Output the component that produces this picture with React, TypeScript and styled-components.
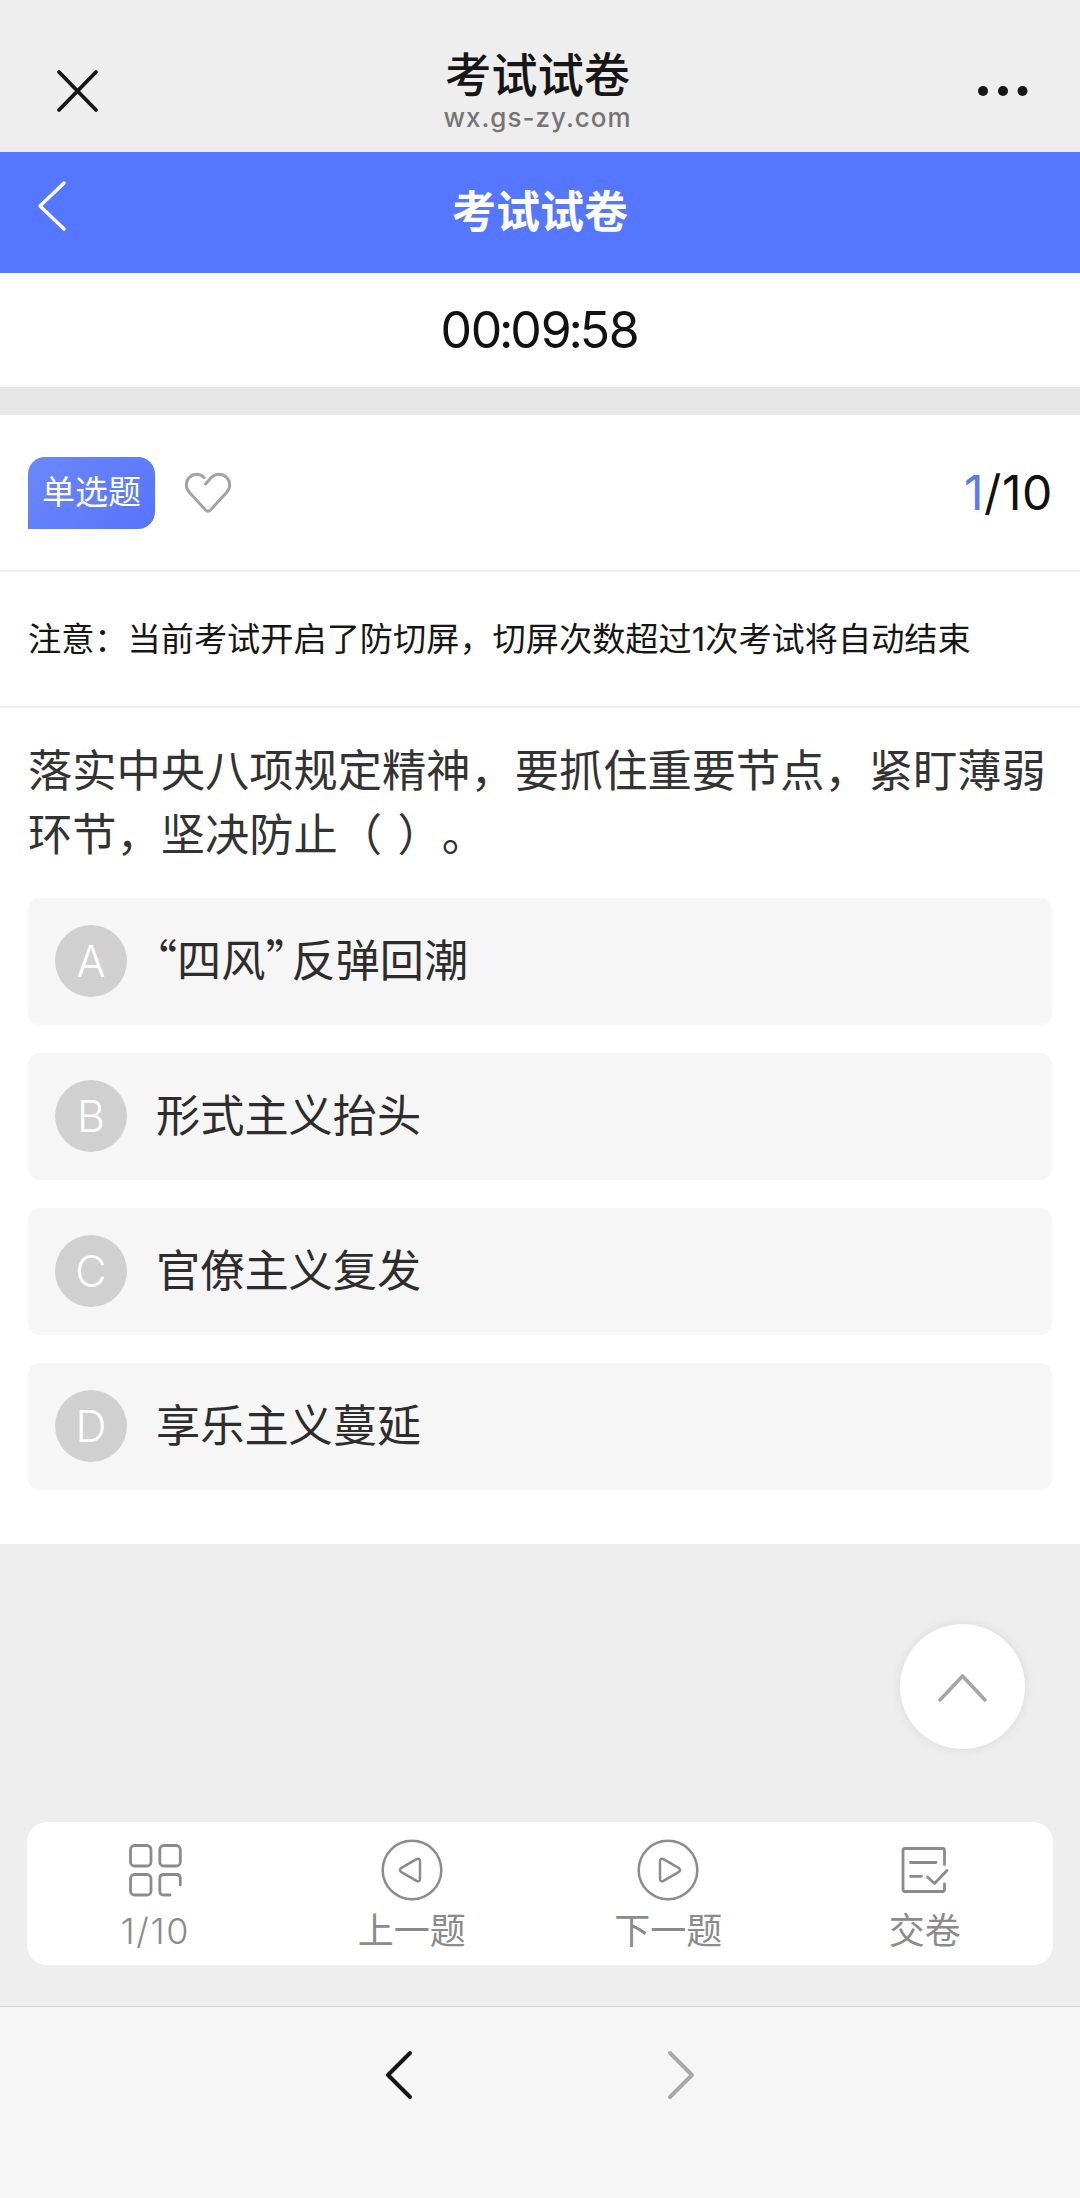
import React from 'react';
import styled, { createGlobalStyle } from 'styled-components';

const GlobalStyle = createGlobalStyle`
  * { box-sizing: border-box; }
  body {
    margin: 0;
    background: #eeeeee;
    font-family: Inter, "Noto Sans CJK SC", sans-serif;
    color: #1a1a1a;
    text-spacing-trim: space-all;
  }
  button {
    border: 0;
    padding: 0;
    background: none;
    font: inherit;
    color: inherit;
  }
  svg { display: block; flex: none; }
`;

const Page = styled.div`
  width: 1080px;
  height: 2198px;
  display: flex;
  flex-direction: column;
  overflow: hidden;
`;

const BrowserBar = styled.header`
  height: 152px;
  padding: 30px 52px 0 55px;
  display: flex;
  align-items: center;
  justify-content: space-between;
  background: #eeeeee;
`;

const BrowserTitle = styled.div`
  display: flex;
  flex-direction: column;
  align-items: center;
  padding-bottom: 2px;
  padding-right: 2px;
`;

const PageName = styled.div`
  font-size: 46.3px;
  font-weight: 500;
  line-height: 56px;
  color: #161616;
`;

const Host = styled.div`
  font-size: 26px;
  font-weight: 500;
  line-height: 30px;
  letter-spacing: 1px;
  color: #757575;
`;

const AppBar = styled.div`
  height: 121px;
  padding: 0 35px;
  display: grid;
  grid-template-columns: 60px 1fr 60px;
  align-items: center;
  background: #5576fe;
  color: #ffffff;
`;

const AppTitle = styled.h1`
  margin: 0;
  padding-bottom: 2px;
  font-size: 44px;
  font-weight: 700;
  line-height: 60px;
  text-align: center;
`;

const BackButton = styled.button`
  padding-bottom: 13px;
`;

const Timer = styled.div`
  height: 114px;
  padding-right: 1px;
  display: flex;
  justify-content: center;
  background: #ffffff;
  color: #111111;
  font-size: 50px;
  line-height: 115px;
  letter-spacing: -1.2px;
`;

const Colon = styled.span`
  margin: 0 -2px;
`;

const Spacer = styled.div`
  height: 28px;
  background: #e7e7e7;
`;

const Sheet = styled.main`
  height: 1129px;
  background: #ffffff;
`;

const Meta = styled.div`
  height: 157px;
  padding: 0 27px 0 28px;
  display: flex;
  align-items: center;
  border-bottom: 2px solid #eeeeee;
`;

const Tag = styled.div`
  width: 127px;
  height: 72px;
  border-radius: 17px 17px 17px 0;
  background: linear-gradient(135deg, #6c88fb, #5674fa);
  color: #ffffff;
  font-size: 33px;
  line-height: 70px;
  text-align: center;
`;

const Favourite = styled.button`
  margin-left: 29px;
`;

const Counter = styled.div`
  margin-left: auto;
  padding-top: 1px;
  font-size: 48px;
  line-height: 60px;
  letter-spacing: 0.6px;
  color: #111111;
`;

const Current = styled.span`
  color: #5b7be6;
`;

const Notice = styled.p`
  margin: 0;
  height: 136px;
  padding: 0 28px;
  border-bottom: 2px solid #eeeeee;
  font-size: 33.2px;
  line-height: 134px;
  white-space: nowrap;
  color: #161616;
`;

const Question = styled.p`
  margin: 0;
  padding: 31px 28px 0;
  height: 190px;
  font-size: 44.25px;
  line-height: 64px;
  color: #333333;
`;

const Line = styled.span`
  display: block;
  white-space: nowrap;
  word-spacing: 3px;
`;

const Options = styled.div`
  padding: 0 28px;
  display: flex;
  flex-direction: column;
  gap: 28px;
`;

const Option = styled.button`
  height: 127px;
  padding: 0 0 2px 27px;
  display: flex;
  align-items: center;
  gap: 29px;
  border-radius: 12px;
  background: #f6f6f6;
  color: #2d2d2d;
  font-size: 44.2px;
  line-height: 60px;
`;

const OptionText = styled.span`
  padding-top: 1px;
`;

const Letter = styled.span`
  width: 72px;
  height: 72px;
  border-radius: 50%;
  background: #d0d0d0;
  color: #ffffff;
  font-size: 43px;
  font-weight: 300;
  line-height: 73px;
  text-align: center;
`;

const Quote = styled.span<{ $width: number }>`
  display: inline-block;
  width: ${(p) => p.$width}px;
  font-family: "Noto Sans CJK SC", sans-serif;
  font-feature-settings: "palt";
  line-height: 1;
  text-align: center;
  text-indent: -2px;
`;

const Floor = styled.div`
  position: relative;
  height: 462px;
  padding: 278px 27px 0;
  background: #eeeeee;
`;

const ToTop = styled.button`
  position: absolute;
  top: 80px;
  right: 55px;
  width: 125px;
  height: 125px;
  border-radius: 50%;
  background: #ffffff;
  box-shadow: 0 0 12px rgba(0, 0, 0, 0.09);
  display: flex;
  align-items: center;
  justify-content: center;
`;

const Toolbar = styled.nav`
  height: 143px;
  border-radius: 20px;
  background: #ffffff;
  display: grid;
  grid-template-columns: repeat(4, 1fr);
`;

const Tool = styled.button`
  display: flex;
  flex-direction: column;
  align-items: center;
  padding-top: 16px;
  color: #8b8b8b;
  font-size: 36px;
  line-height: 48px;
`;

const ToolLabel = styled.span<{ $numeric?: boolean }>`
  margin-top: 5px;
  font-weight: ${(p) => (p.$numeric ? 300 : 400)};
  letter-spacing: ${(p) => (p.$numeric ? '1.6px' : '0')};
`;

const NavBar = styled.footer`
  height: 192px;
  border-top: 1px solid #d0d0d0;
  background: #f6f6f6;
  display: flex;
  justify-content: center;
  gap: 252px;
  padding-top: 42px;
`;

const icon = { fill: 'none', stroke: 'currentColor', strokeLinecap: 'round', strokeLinejoin: 'round' } as const;

const CloseIcon = () => (
  <svg width="44" height="44" viewBox="0 0 44 44" {...icon} stroke="#161616" strokeWidth="3.8">
    <path d="M4 3 41 41M41 3 4 41" />
  </svg>
);

const MoreIcon = () => (
  <svg width="50" height="14" viewBox="0 0 50 14" fill="#161616">
    <circle cx="5" cy="7" r="5" />
    <circle cx="25" cy="7" r="5" />
    <circle cx="44.5" cy="7" r="5" />
  </svg>
);

const BackIcon = () => (
  <svg width="34" height="52" viewBox="0 0 34 52" {...icon} strokeWidth="3.4">
    <path d="M29 3 5 26 29 49" />
  </svg>
);

const HeartIcon = () => (
  <svg width="48" height="42" viewBox="0 0 48 42" {...icon} stroke="#a3a3a3" strokeWidth="3">
    <path d="M20 5.500C15.500 1.200 9.500 1.500 5.500 5.300C1.200 9.600 1.200 16 5.500 20.500L21.500 38Q24 40.500 26.500 38L42.500 20.500C46.800 16 46.800 9.600 42.500 5.300C38.200 1.200 31.500 1.200 27.500 5.300L21.500 12" />
  </svg>
);

const GridIcon = () => (
  <svg width="64" height="64" viewBox="0 0 64 64" {...icon} strokeWidth="2.8">
    <rect x="7.500" y="7.500" width="20.500" height="20.500" rx="4" />
    <rect x="36.800" y="7.500" width="20.500" height="20.500" rx="4" />
    <rect x="7.500" y="36.500" width="20.500" height="20.500" rx="4" />
    <path d="M57.300 47V40.500Q57.300 36.500 53.300 36.500H40.800Q36.800 36.500 36.800 40.500V53Q36.800 57 40.800 57H47" />
  </svg>
);

const PlayIcon = ({ back = false }: { back?: boolean }) => (
  <svg width="64" height="64" viewBox="0 0 64 64" {...icon} strokeWidth="2.5">
    <circle cx="32" cy="32" r="29.300" />
    <path
      transform={back ? 'matrix(-1 0 0 1 64 0)' : undefined}
      d="M24 23.500Q24 19.500 27.500 21.200L42.500 29.800Q45.500 32 42.500 34.200L27.500 42.800Q24 44.500 24 40.500Z"
    />
  </svg>
);

const SubmitIcon = () => (
  <svg width="64" height="64" viewBox="0 0 64 64" {...icon} strokeWidth="2.8">
    <path d="M51.500 26.500V12.500Q51.500 10.500 49.500 10.500H12Q10 10.500 10 12.500V51.500Q10 53.500 12 53.500H49.500Q51.500 53.500 51.500 51.500V46M17.500 24.500H43M17.500 38.300H28.500M34.500 39 41.500 45.500 54 32.500" />
  </svg>
);

const UpIcon = () => (
  <svg width="54" height="34" viewBox="0 0 54 34" {...icon} stroke="#a5a5a5" strokeWidth="3.600">
    <path d="M4 30 26.500 6 49 30" />
  </svg>
);

const Chevron = ({ forward = false }: { forward?: boolean }) => (
  <svg width="30" height="52" viewBox="0 0 30 52" {...icon} stroke={forward ? '#a9a9a9' : '#161616'} strokeWidth="4">
    <path d={forward ? 'M4 4 26 26 4 48' : 'M26 4 4 26 26 48'} />
  </svg>
);

const options = [
  { letter: 'A', text: <><Quote $width={21}>“</Quote>四风<Quote $width={26}>”</Quote>反弹回潮</> },
  { letter: 'B', text: '形式主义抬头' },
  { letter: 'C', text: '官僚主义复发' },
  { letter: 'D', text: '享乐主义蔓延' },
];

const tools = [
  { label: '1/10', glyph: <GridIcon />, numeric: true },
  { label: '上一题', glyph: <PlayIcon back /> },
  { label: '下一题', glyph: <PlayIcon /> },
  { label: '交卷', glyph: <SubmitIcon /> },
];

export default function App() {
  return (
    <Page>
      <GlobalStyle />
      <BrowserBar>
        <CloseIcon />
        <BrowserTitle>
          <PageName>考试试卷</PageName>
          <Host>wx.gs-zy.com</Host>
        </BrowserTitle>
        <MoreIcon />
      </BrowserBar>
      <AppBar>
        <BackButton><BackIcon /></BackButton>
        <AppTitle>考试试卷</AppTitle>
      </AppBar>
      <Timer>00<Colon>:</Colon>09<Colon>:</Colon>58</Timer>
      <Spacer />
      <Sheet>
        <Meta>
          <Tag>单选题</Tag>
          <Favourite><HeartIcon /></Favourite>
          <Counter><Current>1</Current>/10</Counter>
        </Meta>
        <Notice>注意：当前考试开启了防切屏，切屏次数超过1次考试将自动结束</Notice>
        <Question>
          <Line>落实中央八项规定精神，要抓住重要节点，紧盯薄弱</Line>
          <Line>环节，坚决防止（ ）。</Line>
        </Question>
        <Options>
          {options.map((o) => (
            <Option key={o.letter}>
              <Letter>{o.letter}</Letter>
              <OptionText>{o.text}</OptionText>
            </Option>
          ))}
        </Options>
      </Sheet>
      <Floor>
        <ToTop><UpIcon /></ToTop>
        <Toolbar>
          {tools.map((t) => (
            <Tool key={t.label}>
              {t.glyph}
              <ToolLabel $numeric={t.numeric}>{t.label}</ToolLabel>
            </Tool>
          ))}
        </Toolbar>
      </Floor>
      <NavBar>
        <Chevron />
        <Chevron forward />
      </NavBar>
    </Page>
  );
}
